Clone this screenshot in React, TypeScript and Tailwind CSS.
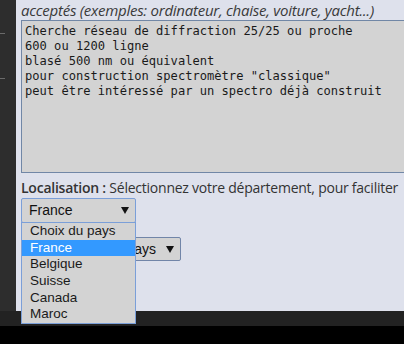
import React from 'react';

const lines = [
  'Cherche réseau de diffraction 25/25 ou proche',
  '600 ou 1200 ligne',
  'blasé 500 nm ou équivalent',
  'pour construction spectromètre "classique"',
  'peut être intéressé par un spectro déjà construit',
];

const countries = ['Choix du pays', 'France', 'Belgique', 'Suisse', 'Canada', 'Maroc'];

const Arrow = () => (
  <svg width="8" height="7" viewBox="0 0 8 7" className="shrink-0">
    <polygon points="0,0 8,0 4,7" fill="#111" />
  </svg>
);

const App: React.FC = () => {
  return (
    <div className="w-[404px] h-[344px] flex flex-col bg-black overflow-hidden">
      <div className="flex h-[311px] shrink-0">
        {/* Sidebar */}
        <div className="w-4 shrink-0 bg-[#2d2d2d] flex flex-col">
          <div className="mt-[33px] w-[5px] h-px bg-[#6a6a6a]" />
          <div className="mt-[44px] w-[5px] h-px bg-[#6a6a6a]" />
        </div>

        {/* Main */}
        <div className="flex-1 bg-[#dee1ec] pl-[5px] relative z-10">
          <p className="italic text-[15px] leading-[20px] text-[#3a3a3a] whitespace-nowrap font-['Open_Sans',sans-serif] tracking-[-0.25px]">
            acceptés (exemples: ordinateur, chaise, voiture, yacht...)
          </p>

          <div className="w-[400px] h-[153px] border border-[#7187a6] bg-[#d3d3d3] pt-[3px] pl-[3px] font-['DejaVu_Sans_Mono',monospace] text-[12.1px] leading-[15px] text-[#1a1a1a] whitespace-pre">
            {lines.map((l) => (
              <div key={l}>{l}</div>
            ))}
          </div>

          <p className="mt-[5px] text-[14px] leading-[20px] text-[#333] whitespace-nowrap font-['Open_Sans',sans-serif] tracking-[-0.24px]">
            <span className="font-semibold">Localisation :</span> Sélectionnez votre département, pour faciliter
          </p>

          <div className="relative font-['Liberation_Sans',Arial,sans-serif]">
            <div className="w-[115px] h-[25px] border border-[#7b9fd8] rounded-[2px] bg-[#d3d3d3] flex items-center justify-between pl-[7px] pr-[6px] text-[14px] text-[#111]">
              <span>France</span>
              <Arrow />
            </div>

            <div className="mt-[14px] w-[160px] h-[24px] border border-[#7185a8] rounded-[2px] bg-[#d3d3d3] flex items-center justify-end gap-[10px] pr-[6px] text-[14px] text-[#111]">
              <span>Choix du pays</span>
              <Arrow />
            </div>

            {/* Open dropdown list */}
            <div className="absolute left-0 top-[24px] w-[115px] border border-[#7b9fd8] bg-[#d3d3d3] flex flex-col text-[13.5px] text-[#1a1a1a]">
              {countries.map((c) => (
                <div
                  key={c}
                  className={[
                    'h-[16.67px] leading-[16.67px] pl-[8px]',
                    c === 'France' ? 'bg-[#3399ff] text-white' : '',
                  ].join(' ')}
                >
                  {c}
                </div>
              ))}
            </div>
          </div>
        </div>
      </div>

      {/* Bottom bar */}
      <div className="h-[15px] shrink-0 bg-[#222222]" />
      <div className="flex-1 bg-black" />
    </div>
  );
};

export default App;
